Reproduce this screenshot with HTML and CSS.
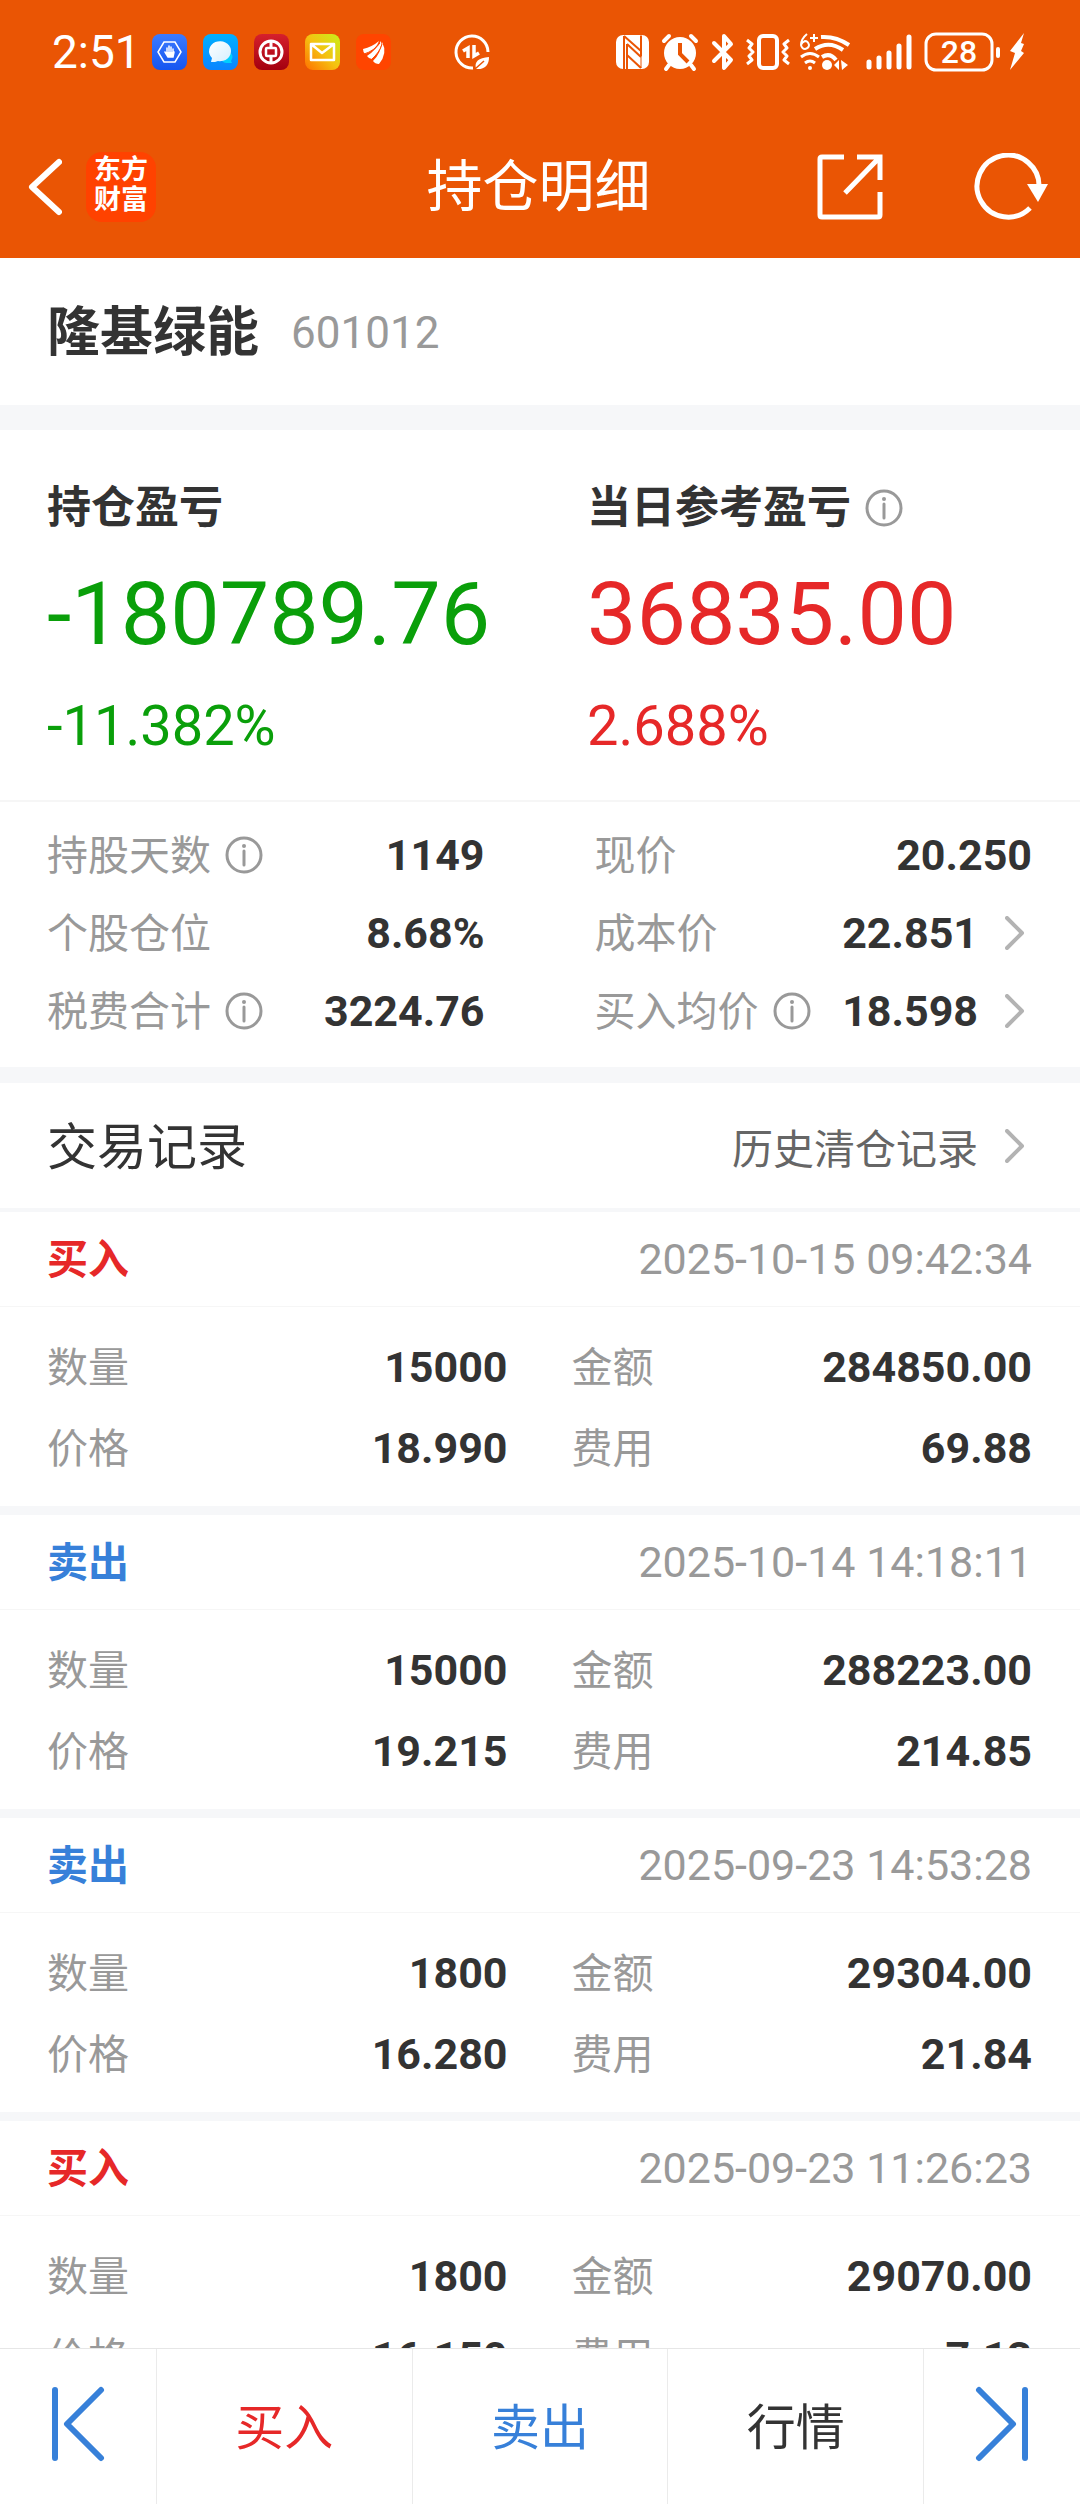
FILE: index.html
```html
<!DOCTYPE html>
<html lang="zh-CN">
<head>
    <meta charset="UTF-8">
    <meta name="viewport" content="width=device-width, initial-scale=1.0">
    <title>持仓明细</title>
    <link rel="stylesheet" href="styles.css">
</head>
<body>
    <!-- Shared icons -->
    <svg class="sprite" aria-hidden="true">
        <symbol id="info" viewBox="0 0 38 38">
            <circle cx="19" cy="19" r="17" fill="none" stroke="currentColor" stroke-width="3"/>
            <circle cx="19" cy="10" r="2" fill="currentColor"/>
            <path d="M19 15v14" stroke="currentColor" stroke-width="3" stroke-linecap="round"/>
        </symbol>
        <symbol id="chevron" viewBox="0 0 20 34">
            <path d="M2 2l15 15L2 32" fill="none" stroke="currentColor" stroke-width="4" stroke-linecap="round" stroke-linejoin="round"/>
        </symbol>
    </svg>

    <div class="app">
        <header class="header">
            <!-- Status bar -->
            <div class="status">
                <div class="status-left">
                    <span class="clock">2:51</span>
                    <svg width="240" height="36" viewBox="0 0 240 36">
                        <defs>
                            <linearGradient id="g-blue" x2="0" y2="1"><stop offset="0" stop-color="#3c7bff"/><stop offset="1" stop-color="#1555f0"/></linearGradient>
                            <linearGradient id="g-sky" x2="0" y2="1"><stop offset="0" stop-color="#00b0ff"/><stop offset="1" stop-color="#0a84ff"/></linearGradient>
                            <linearGradient id="g-bubble" x2="1" y2="1"><stop offset="0" stop-color="#fff"/><stop offset="1" stop-color="#d4efff"/></linearGradient>
                            <linearGradient id="g-red" x2="0" y2="1"><stop offset="0" stop-color="#d6202c"/><stop offset="1" stop-color="#a3000f"/></linearGradient>
                            <linearGradient id="g-mail" x1="1" y1="0" x2="0" y2="1"><stop offset="0" stop-color="#c8f01a"/><stop offset=".5" stop-color="#f5c211"/><stop offset="1" stop-color="#ff7000"/></linearGradient>
                        </defs>
                        <!-- Blocker -->
                        <rect width="35" height="36" rx="8" fill="url(#g-blue)"/>
                        <path d="M12 8h11l6 10-6 10H12L6 18z" fill="none" stroke="#fff" stroke-width="1.5"/>
                        <path d="M13 18l3 5h5l1-5M15 20v-6M17 20v-8M19 20v-7M21 20v-5" fill="#fff" stroke="#fff" stroke-width="1.5" stroke-linecap="round"/>
                        <!-- Messages -->
                        <rect x="51" width="35" height="36" rx="8" fill="url(#g-sky)"/>
                        <path d="M80 29h-5a6 6 0 1 1 4-2z" fill="#00d0ff"/>
                        <path d="M59 28l1-4a11 10 0 1 1 6 3l-3 1z" fill="url(#g-bubble)"/>
                        <!-- Bank -->
                        <rect x="102" width="35" height="36" rx="8" fill="url(#g-red)"/>
                        <circle cx="119" cy="18" r="11" fill="none" stroke="#fff" stroke-width="3"/>
                        <rect x="114" y="14" width="10" height="8" rx="1" fill="none" stroke="#fff" stroke-width="2.5"/>
                        <path d="M119 7v7M119 22v7" stroke="#fff" stroke-width="3"/>
                        <!-- Mail -->
                        <rect x="153" width="35" height="36" rx="8" fill="url(#g-mail)"/>
                        <path d="M159 10h23v16h-23zl11 9 12-9" fill="none" stroke="#fff" stroke-width="2.5" stroke-linejoin="round"/>
                        <!-- Broker -->
                        <rect x="204" width="35" height="36" rx="8" fill="#ff4500"/>
                        <path d="M211 15q9-2 16-8-3 9-14 13-2-2-2-5zM215 22q9-6 14-15 2 8-9 18-3 0-5-3zM221 27q8-8 9-19 6 11-3 22-4 0-6-3z" fill="#fff"/>
                        <path d="M212 20q10-3 16-11M219 26q9-8 11-16" fill="none" stroke="#ff4500"/>
                    </svg>
                    <svg class="saver" width="36" height="36" viewBox="0 0 36 36" fill="none" stroke="#fff" stroke-width="3">
                        <path d="M19 34A16 16 0 1 1 34 18"/>
                        <path d="M9 17l5-3v10M20 11v11l5-3" stroke-width="3.5"/>
                        <path d="M22 35q-3-11 13-12 0 13-13 12z" fill="#fff" stroke="none"/>
                        <path d="M21 35l9-8" stroke="#ea5504" stroke-width="1.5"/>
                    </svg>
                </div>
                <svg width="408" height="40" viewBox="0 0 408 40" fill="none" stroke="#fff">
                    <!-- NFC -->
                    <rect x="0" y="3" width="33" height="34" rx="7" fill="#fff" stroke="none"/>
                    <path d="M8 4v33M8 4l17 15M25 4v20M11 12v25M11 12l14 13M25 36L11 23" stroke="#ea5504" stroke-width="2"/>
                    <path d="M25 3v33" stroke="#ea5504" stroke-width="1"/>
                    <!-- Alarm -->
                    <circle cx="64" cy="21" r="16" fill="#fff" stroke="none"/>
                    <path d="M48 9l5-5M80 9l-5-5M53 33l-3 4M75 33l3 4" stroke-width="4" stroke-linecap="round"/>
                    <path d="M64 11v11l8 8" stroke="#ea5504" stroke-width="4"/>
                    <!-- Bluetooth -->
                    <path d="M98 11l17 17-7 8V4l7 8-17 17" stroke-width="4" stroke-linejoin="round" stroke-linecap="round"/>
                    <!-- Vibrate -->
                    <rect x="143" y="4" width="18" height="32" rx="4" stroke-width="4"/>
                    <path d="M131 8l5 4-3 4 4 4-4 4 3 4-5 4M173 8l-5 4 3 4-4 4 4 4-3 4 5 4" stroke-width="3" stroke-linejoin="round"/>
                    <!-- Wi-Fi -->
                    <path d="M205 5q15-1 28 8M199 17q14-9 28 1M206 25q8-5 14 3" stroke-width="4"/>
                    <path d="M185 25q9-7 18 0M189 31q5-4 10 0" stroke-width="3"/>
                    <circle cx="194" cy="36" r="2" fill="#fff" stroke="none"/>
                    <circle cx="211" cy="33" r="5" fill="#fff" stroke="none"/>
                    <path d="M218 33l5-5v10zM225 28l7 5-6 5z" fill="#fff" stroke="none"/>
                    <path d="M191 2q-6 5-6 11 1 4 4 4 4-1 4-4-1-4-4-4-3 1-4 4M194 6h8M198 2v8" stroke-width="2"/>
                    <!-- Signal -->
                    <path d="M253 30v5M263 26v9M273 21v14M283 14v21M293 5v30" stroke-width="5" stroke-linecap="round"/>
                    <!-- Battery -->
                    <rect x="310" y="2" width="66" height="36" rx="10" stroke-width="3"/>
                    <path d="M382 17v7" stroke-width="4" stroke-linecap="round"/>
                    <path d="M408 1l-14 18 5 2-5 17 14-17-3-2 3-7-3-1z" fill="#fff" stroke="none"/>
                    <text x="343" y="31" class="battery-text">28</text>
                </svg>
            </div>

            <!-- Title bar -->
            <nav class="nav">
                <div class="nav-side">
                    <button class="icon-button" aria-label="返回">
                        <svg width="34" height="58" viewBox="0 0 34 58"><path d="M31 4L4 29l27 25" fill="none" stroke="#fff" stroke-width="6" stroke-linejoin="round" stroke-linecap="round"/></svg>
                    </button>
                    <a class="logo" href="#">东方<br>财富</a>
                </div>
                <h1>持仓明细</h1>
                <div class="nav-side nav-right">
                    <button class="icon-button" aria-label="分享">
                        <svg width="66" height="66" viewBox="0 0 66 66" fill="none" stroke="#fff" stroke-width="5">
                            <path d="M27 3H5Q3 3 3 5v56q0 2 2 2h56q2 0 2-2V38" />
                            <path d="M40 3h23v23M62 4L28 39"/>
                        </svg>
                    </button>
                    <button class="icon-button" aria-label="刷新">
                        <svg width="76" height="68" viewBox="0 0 76 68">
                            <path d="M66 35A31 31 0 1 0 57 55" fill="none" stroke="#fff" stroke-width="5"/>
                            <path d="M54 31h21L65 49z" fill="#fff"/>
                        </svg>
                    </button>
                </div>
            </nav>
        </header>

        <main class="content">
            <section class="stock">
                <h2>隆基绿能</h2>
                <span>601012</span>
            </section>

            <section class="profit">
                <div class="profit-item green">
                    <h3>持仓盈亏</h3>
                    <p class="amount">-180789.76</p>
                    <p class="percent">-11.382%</p>
                </div>
                <div class="profit-item red">
                    <h3>当日参考盈亏 <svg class="info"><use href="#info"/></svg></h3>
                    <p class="amount">36835.00</p>
                    <p class="percent">2.688%</p>
                </div>
            </section>

            <dl class="stats">
                <div class="pair"><dt><span>持股天数</span> <svg class="info"><use href="#info"/></svg></dt><dd>1149</dd></div>
                <div class="pair"><dt><span>现价</span></dt><dd>20.250</dd></div>
                <div class="pair"><dt><span>个股仓位</span></dt><dd>8.68%</dd></div>
                <div class="pair"><dt><span>成本价</span></dt><dd>22.851 <svg class="chevron"><use href="#chevron"/></svg></dd></div>
                <div class="pair"><dt><span>税费合计</span> <svg class="info"><use href="#info"/></svg></dt><dd>3224.76</dd></div>
                <div class="pair"><dt><span>买入均价</span> <svg class="info"><use href="#info"/></svg></dt><dd>18.598 <svg class="chevron"><use href="#chevron"/></svg></dd></div>
            </dl>

            <section class="records">
                <div class="records-head">
                    <h2>交易记录</h2>
                    <a href="#">历史清仓记录 <svg class="chevron"><use href="#chevron"/></svg></a>
                </div>

                <article class="record">
                    <div class="record-head"><h3 class="buy">买入</h3><time>2025-10-15 09:42:34</time></div>
                    <dl class="record-body">
                        <div class="pair"><dt><span>数量</span></dt><dd>15000</dd></div>
                        <div class="pair"><dt><span>金额</span></dt><dd>284850.00</dd></div>
                        <div class="pair"><dt><span>价格</span></dt><dd>18.990</dd></div>
                        <div class="pair"><dt><span>费用</span></dt><dd>69.88</dd></div>
                    </dl>
                </article>

                <article class="record">
                    <div class="record-head"><h3 class="sell">卖出</h3><time>2025-10-14 14:18:11</time></div>
                    <dl class="record-body">
                        <div class="pair"><dt><span>数量</span></dt><dd>15000</dd></div>
                        <div class="pair"><dt><span>金额</span></dt><dd>288223.00</dd></div>
                        <div class="pair"><dt><span>价格</span></dt><dd>19.215</dd></div>
                        <div class="pair"><dt><span>费用</span></dt><dd>214.85</dd></div>
                    </dl>
                </article>

                <article class="record">
                    <div class="record-head"><h3 class="sell">卖出</h3><time>2025-09-23 14:53:28</time></div>
                    <dl class="record-body">
                        <div class="pair"><dt><span>数量</span></dt><dd>1800</dd></div>
                        <div class="pair"><dt><span>金额</span></dt><dd>29304.00</dd></div>
                        <div class="pair"><dt><span>价格</span></dt><dd>16.280</dd></div>
                        <div class="pair"><dt><span>费用</span></dt><dd>21.84</dd></div>
                    </dl>
                </article>

                <article class="record">
                    <div class="record-head"><h3 class="buy">买入</h3><time>2025-09-23 11:26:23</time></div>
                    <dl class="record-body">
                        <div class="pair"><dt><span>数量</span></dt><dd>1800</dd></div>
                        <div class="pair"><dt><span>金额</span></dt><dd>29070.00</dd></div>
                        <div class="pair"><dt><span>价格</span></dt><dd>16.150</dd></div>
                        <div class="pair"><dt><span>费用</span></dt><dd>7.13</dd></div>
                    </dl>
                </article>
            </section>
        </main>

        <!-- Bottom actions -->
        <footer class="actions">
            <button aria-label="上一个">
                <svg width="54" height="76" viewBox="0 0 54 76" fill="none" stroke="#3780d9" stroke-width="6" stroke-linecap="round" stroke-linejoin="round"><path d="M4 4v68M50 4L16 38l34 34"/></svg>
            </button>
            <button class="buy">买入</button>
            <button class="sell">卖出</button>
            <button>行情</button>
            <button aria-label="下一个">
                <svg width="54" height="76" viewBox="0 0 54 76" fill="none" stroke="#3780d9" stroke-width="6" stroke-linecap="round" stroke-linejoin="round"><path d="M50 4v68M4 4l34 34L4 72"/></svg>
            </button>
        </footer>
    </div>
</body>
</html>
```
FILE: styles.css
```css
* {
    box-sizing: border-box;
    margin: 0;
    padding: 0;
}

body {
    font-family: Roboto, "Noto Sans CJK SC", sans-serif;
    color: #333;
    background-color: #fff;
}

svg {
    display: block;
    flex-shrink: 0;
}

button {
    background: none;
    border: none;
    font: inherit;
    color: inherit;
    cursor: pointer;
}

a {
    color: inherit;
    text-decoration: none;
}

.sprite {
    position: absolute;
    width: 0;
    height: 0;
}

.app {
    display: flex;
    flex-direction: column;
    height: 100vh;
}

/* Header */
.header {
    background-color: #ea5504;
    color: #fff;
    padding-bottom: 18px;
}

.status {
    display: flex;
    justify-content: space-between;
    align-items: center;
    height: 104px;
    padding: 0 56px 0 52px;
}

.status-left {
    display: flex;
    align-items: center;
}

.clock {
    width: 100px;
    font-size: 46px;
    line-height: 56px;
}

.saver {
    margin-left: 62px;
}

.battery-text {
    fill: #fff;
    stroke: none;
    font-size: 32px;
    font-weight: 500;
    text-anchor: middle;
}

.nav {
    display: flex;
    justify-content: space-between;
    align-items: center;
    height: 136px;
    padding: 30px 31px 0 28px;
}

.nav h1 {
    font-size: 56px;
    font-weight: 400;
    line-height: 80px;
}

.nav-side {
    display: flex;
    flex: 1;
    align-items: center;
    gap: 24px;
}

.nav-right {
    justify-content: flex-end;
    gap: 90px;
}

.logo {
    padding: 3px 8px 7px;
    border-radius: 16px;
    background-color: #ff4200;
    font-size: 27px;
    font-weight: 700;
    line-height: 30px;
}

/* Content */
.content {
    flex: 1;
    min-height: 0;
    overflow: hidden;
}

.stock {
    display: flex;
    align-items: center;
    gap: 32px;
    height: 172px;
    padding: 3px 47px 0;
    border-bottom: 25px solid #f6f7f9;
}

.stock h2 {
    font-size: 53px;
    line-height: 80px;
}

.stock span {
    font-size: 44px;
    color: #999;
}

.profit {
    display: grid;
    grid-template-columns: 1fr 1fr;
    padding: 46px 0 38px;
    border-bottom: 2px solid #f6f6f6;
}

.profit-item {
    padding-left: 47px;
}

.profit h3 {
    display: flex;
    align-items: center;
    gap: 14px;
    font-size: 44px;
    line-height: 64px;
    color: #333;
}

.amount {
    font-size: 88px;
    line-height: 104px;
    margin-top: 22px;
}

.percent {
    font-size: 56px;
    line-height: 72px;
    margin-top: 24px;
}

.green {
    color: #0a9f0a;
}

.red,
.buy {
    color: #e62828;
}

.sell {
    color: #3780d9;
}

.info {
    width: 38px;
    height: 38px;
    color: #999;
}

.chevron {
    width: 20px;
    height: 34px;
    color: #b3b3b3;
    margin: 0 7px 0 13px;
}

.stats {
    display: grid;
    grid-template-columns: 1fr 1fr;
    column-gap: 110px;
    padding: 14px 48px 17px 47px;
    border-bottom: 16px solid #f6f7f9;
}

.stats .pair {
    height: 78px;
}

.pair {
    display: flex;
    justify-content: space-between;
    align-items: center;
}

.pair dt,
.pair dd {
    display: flex;
    align-items: center;
    gap: 14px;
    white-space: nowrap;
}

.pair dt {
    font-size: 41px;
    color: #999;
}

.pair dt span,
.record-head h3,
.records-head h2,
.actions button {
    padding-bottom: 6px;
}

.pair dd {
    font-size: 43px;
    font-weight: 700;
}

/* Records */
.records-head {
    display: flex;
    justify-content: space-between;
    align-items: center;
    height: 129px;
    padding: 0 48px 0 47px;
    border-bottom: 4px solid #f6f7f9;
}

.records-head h2 {
    font-size: 50px;
    font-weight: 400;
}

.records-head a {
    display: flex;
    align-items: center;
    gap: 14px;
    font-size: 41px;
    color: #666;
}

.record {
    border-bottom: 9px solid #f6f7f9;
}

.record-head {
    display: flex;
    justify-content: space-between;
    align-items: center;
    height: 95px;
    padding: 0 48px 0 47px;
    border-bottom: 1px solid #f6f6f6;
}

.record-head h3 {
    font-size: 41px;
}

.record-head time {
    font-size: 43px;
    color: #999;
}

.record-body {
    display: grid;
    grid-template-columns: 1fr 1fr;
    column-gap: 64px;
    padding: 19px 48px 18px 47px;
}

.record-body .pair {
    height: 81px;
}

/* Bottom actions */
.actions {
    display: grid;
    grid-template-columns: 156px 1fr 1fr 1fr 157px;
    height: 156px;
    border-top: 1px solid #e6e6e6;
    background-color: #fff;
}

.actions button {
    display: flex;
    justify-content: center;
    align-items: center;
    font-size: 49px;
}

.actions button + button {
    border-left: 1px solid #ebebeb;
}
```
